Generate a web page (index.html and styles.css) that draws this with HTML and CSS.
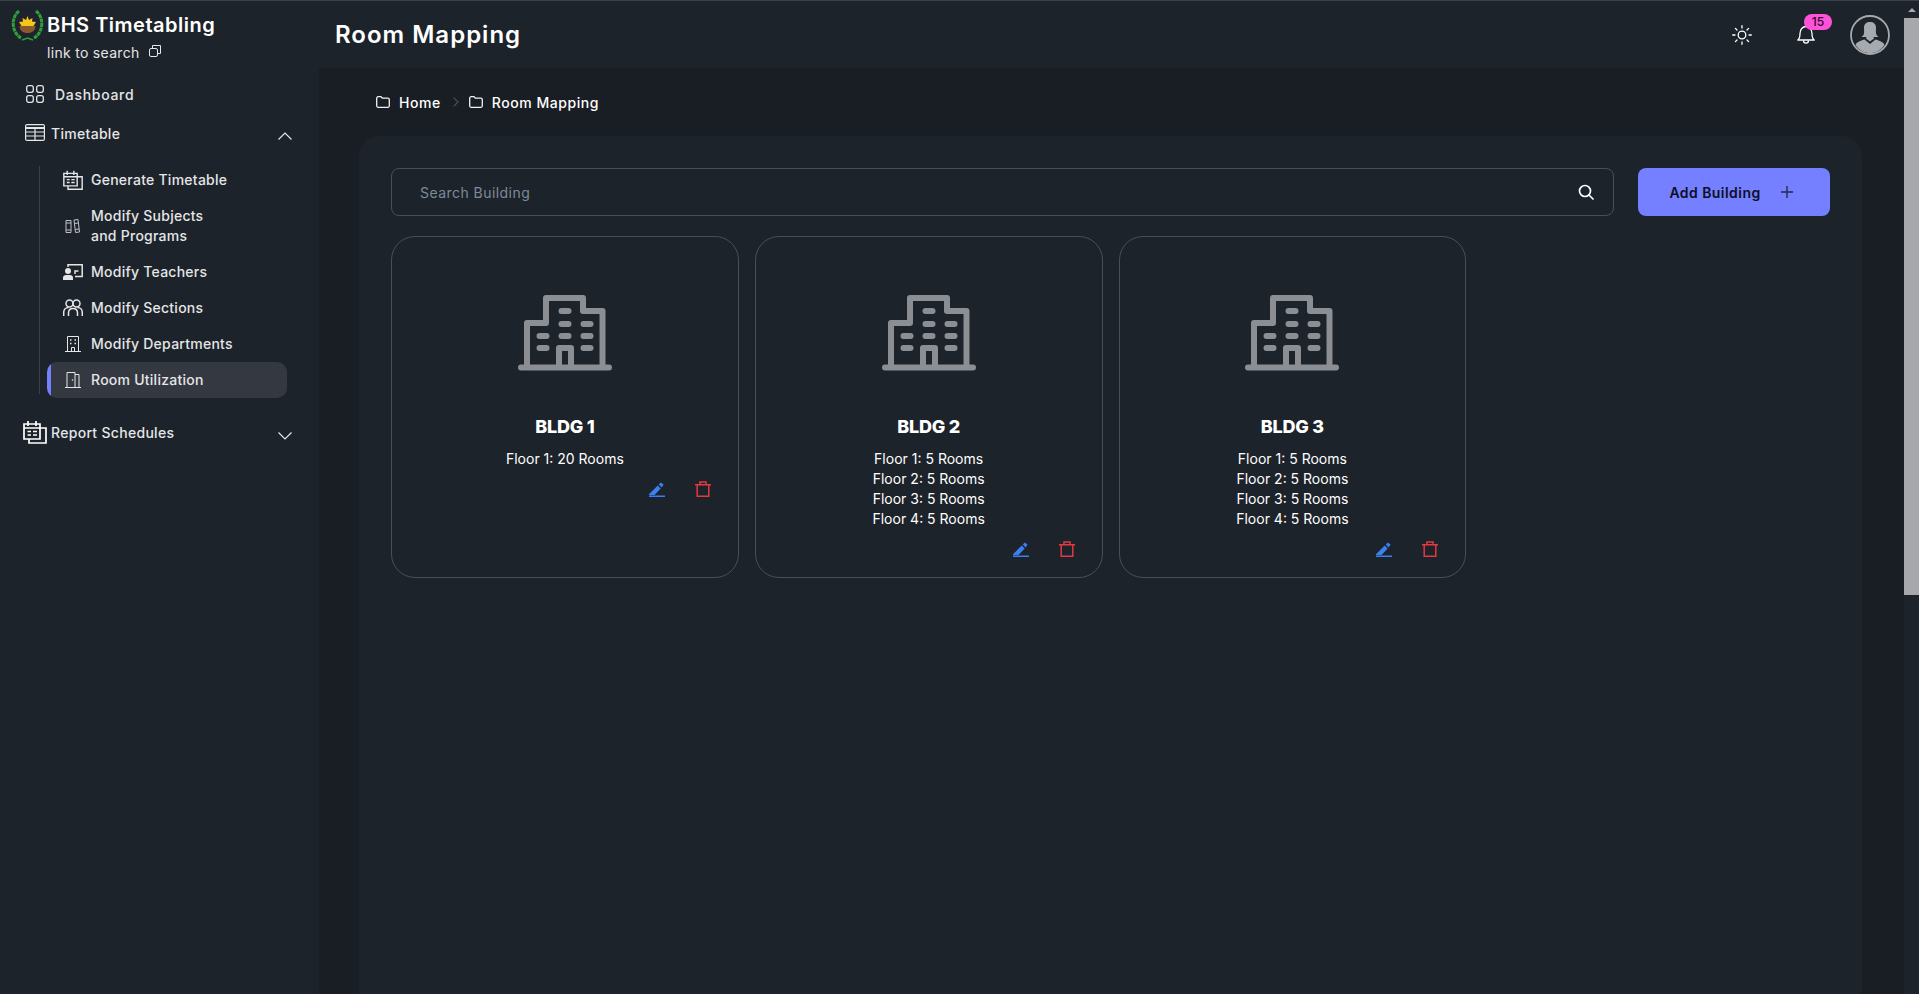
FILE: index.html
```html
<!DOCTYPE html>
<html lang="en">
<head>
    <meta charset="UTF-8">
    <meta name="viewport" content="width=device-width, initial-scale=1.0">
    <title>Room Mapping</title>
    <!-- STYLING -->
    <link rel="stylesheet" href="styles.css">
</head>
<body>
    <!-- shared icons -->
    <svg class="icon-defs" aria-hidden="true">
        <symbol id="i-building" viewBox="0 0 94 76">
            <g fill="none" stroke="currentColor" stroke-width="6" stroke-linecap="round" stroke-linejoin="round">
                <path d="M3 72.500H91M9 72.500V28H28V3H65V16H84.500V72.500M41 72.500V53H53V72.500"/>
                <path d="M43.500 16H50.500M43.500 29H50.500M43.500 41H50.500M65.500 29H72.500M65.500 41H72.500M65.500 53H72.500M21.500 41H28.500M21.500 53H28.500"/>
            </g>
        </symbol>
        <symbol id="i-pencil" viewBox="0 0 16 16">
            <path fill="currentColor" d="M0 13.200 8.700 4.500l3 3L5.600 14H0zM9.800 3.400 11.800 1.400l2.800 2.100-1.900 2.900zM0 14.600H16V16H0z"/>
        </symbol>
        <symbol id="i-trash" viewBox="0 0 16 16">
            <path fill="none" stroke="currentColor" stroke-width="1.500" d="M0 3.700H16M2.200 3.700V15.300H13.800V3.700M5 3.700V.9H11V3.700"/>
        </symbol>
        <symbol id="i-folder" viewBox="0 0 14 12">
            <path fill="none" stroke="currentColor" stroke-width="1.300" stroke-linejoin="round" d="M.7 2.200A1.500 1.500 0 0 1 2.200.7H5L6.500 2.200H11.800A1.500 1.500 0 0 1 13.300 3.700V9.800A1.500 1.500 0 0 1 11.800 11.300H2.200A1.500 1.500 0 0 1 .7 9.800Z"/>
        </symbol>
        <symbol id="i-calendar" viewBox="0 0 24 24">
            <path fill="none" stroke="currentColor" stroke-width="1.700" d="M1 4H17V19H1ZM5 1V6M13 1V6M1 8H17M4.500 11.500H8M10 11.500H14M4.500 15H8M10 15H14M17 8H23V23H6V19"/>
        </symbol>
    </svg>

    <div class="app">
        <aside class="sidebar">
            <div class="brand">
                <svg class="logo" viewBox="0 0 34 32">
                    <circle cx="16.500" cy="15" r="13" fill="#20232f"/>
                    <path fill="none" stroke="#2f9e3a" stroke-width="3" stroke-dasharray="4 .6" d="M8 2C0 8 0 23 10 29M25 2C33 8 33 23 23 29"/>
                    <path fill="none" stroke="#2f9e3a" stroke-width="1.500" d="M11 31 16.500 29 22 31"/>
                    <path fill="#f5c71a" d="M16.500 7 18 11 21.500 9 21 12.500 25 13 22.500 17H10.500L8 13 12 12.500 11.500 9 15 11Z"/>
                    <path fill="#8a5a2e" d="M8.500 17H24.500C24.500 21.500 21 24 16.500 24S8.500 21.500 8.500 17Z"/>
                </svg>
                <span class="brand-name">BHS Timetabling</span>
            </div>
            <div class="brand-link">
                <span>link to search</span>
                <svg class="icon-copy" viewBox="0 0 12 12" fill="none" stroke="currentColor">
                    <path d="M3.500 3V.5H11.500V8.500H9"/>
                    <rect x=".5" y="3.500" width="8" height="8" rx="1.500"/>
                </svg>
            </div>

            <a class="nav-item nav-dashboard">
                <svg class="icon-dash" viewBox="0 0 18 18" fill="none" stroke="currentColor" stroke-width="1.300">
                    <rect x=".7" y=".7" width="6.600" height="6.600" rx="2"/>
                    <rect x="10.700" y=".7" width="6.600" height="6.600" rx="2"/>
                    <rect x=".7" y="10.700" width="6.600" height="6.600" rx="2"/>
                    <rect x="10.700" y="10.700" width="6.600" height="6.600" rx="2"/>
                </svg>
                <span>Dashboard</span>
            </a>

            <a class="nav-item nav-timetable">
                <svg class="icon-table" viewBox="0 0 20 17" fill="none" stroke="currentColor" stroke-width="1.200">
                    <rect x=".6" y=".6" width="18.800" height="15.800" rx="1.500"/>
                    <path stroke-width="2" d="M0 4H20"/>
                    <path d="M0 8H20M0 12H20M10 4V17"/>
                </svg>
                <span class="nav-label">Timetable</span>
                <svg class="chevron" viewBox="0 0 14 8" fill="none" stroke="currentColor" stroke-width="1.200"><path d="M.5 7.500 7 1l6.500 6.500"/></svg>
            </a>

            <ul class="subnav">
                <li class="sub-item">
                    <svg class="sub-icon"><use href="#i-calendar"/></svg>
                    <span>Generate Timetable</span>
                </li>
                <li class="sub-item sub-item-tall">
                    <svg class="sub-icon sub-icon-small sub-icon-books" viewBox="0 0 16 16" fill="none" stroke="currentColor">
                        <path d="M1 2.500H6V14.500H1ZM1 5H6M1 12H6M9 2 13 1.500 14.500 14 10.500 14.500ZM9.500 5.500 13.500 5M10.300 11.500 14 11"/>
                    </svg>
                    <span>Modify Subjects<br>and Programs</span>
                </li>
                <li class="sub-item">
                    <svg class="sub-icon" viewBox="0 0 20 16">
                        <path fill="none" stroke="currentColor" stroke-width="1.500" d="M5 3V.8H19.200V12.500H12"/>
                        <path fill="none" stroke="currentColor" stroke-width="1.500" d="M12 10V7H15.500"/>
                        <circle cx="5" cy="7" r="3" fill="currentColor"/>
                        <path fill="currentColor" d="M0 16V13.500C0 12 1.500 11 3 11H7C8.500 11 10 12 10 13.500V16Z"/>
                    </svg>
                    <span>Modify Teachers</span>
                </li>
                <li class="sub-item">
                    <svg class="sub-icon" viewBox="0 0 20 18" fill="none" stroke="currentColor" stroke-width="1.500">
                        <circle cx="6.500" cy="4.500" r="3.500"/>
                        <circle cx="13.500" cy="4.500" r="3.500"/>
                        <path d="M.7 17V13.500C.7 10.500 3 8.500 5.500 8.500M19.300 17V13.500C19.300 10.500 17 8.500 14.500 8.500M5.500 17V14C5.500 11 7.500 9.500 10 9.500S14.500 11 14.500 14V17"/>
                    </svg>
                    <span>Modify Sections</span>
                </li>
                <li class="sub-item">
                    <svg class="sub-icon sub-icon-small" viewBox="0 0 16 16" fill="none" stroke="currentColor">
                        <path d="M0 15.500H16M2.500 15.500V.5H13.500V15.500M6.500 15.500V11.500H9.500V15.500"/>
                        <path stroke-width="1.400" d="M5 4H6.500M9.500 4H11M5 7.500H6.500M9.500 7.500H11"/>
                    </svg>
                    <span>Modify Departments</span>
                </li>
                <li class="sub-item sub-item-active">
                    <svg class="sub-icon sub-icon-small" viewBox="0 0 16 16" fill="none" stroke="currentColor">
                        <path d="M0 15.500H16M2 15.500V.5H10V15.500M10 2.500H14V15.500"/>
                        <circle cx="7.500" cy="8" r=".8" fill="currentColor" stroke="none"/>
                    </svg>
                    <span>Room Utilization</span>
                </li>
            </ul>

            <a class="nav-item nav-report">
                <svg class="icon-report"><use href="#i-calendar"/></svg>
                <span class="nav-label">Report Schedules</span>
                <svg class="chevron chevron-down" viewBox="0 0 14 8" fill="none" stroke="currentColor" stroke-width="1.200"><path d="M.5.5 7 7l6.500-6.500"/></svg>
            </a>
        </aside>

        <div class="main">
            <header class="topbar">
                <h1 class="page-title">Room Mapping</h1>
                <svg class="icon-sun" viewBox="0 0 20 20" fill="none" stroke="currentColor" stroke-width="1.300" stroke-linecap="round">
                    <circle cx="10" cy="10" r="3.800"/>
                    <path d="M10 .7V3M10 17V19.300M.7 10H3M17 10H19.300M3.400 3.400 5 5M15 15 16.600 16.600M3.400 16.600 5 15M15 5 16.600 3.400"/>
                </svg>
                <div class="bell">
                    <svg class="icon-bell" viewBox="0 0 18 19" fill="none" stroke="currentColor" stroke-width="1.300" stroke-linejoin="round">
                        <path d="M.8 15C2.800 13.500 3 11 3 8.500 3 4.500 5.500 1.500 9 1.500S15 4.500 15 8.500C15 11 15.200 13.500 17.200 15Z"/>
                        <path d="M6.500 15.500C6.500 19 11.500 19 11.500 15.500"/>
                    </svg>
                    <span class="badge">15</span>
                </div>
                <svg class="avatar" viewBox="0 0 40 40">
                    <circle cx="20" cy="20" r="19" fill="none" stroke="#a6a9ae" stroke-width="1.800"/>
                    <path fill="#a6a9ae" d="M13.500 20C14.500 18 14 15 14 12.500 14 9 16.500 7 20 7S26 9 26 12.500C26 15 25.500 18 26.500 20L28.500 22H23.500L24 23.500 20 26.500 16 23.500 16.500 22H11.500Z"/>
                    <path fill="#a6a9ae" d="M5.500 30C6.500 27.500 9 26 14.500 24.500L20 29 25.500 24.500C31 26 33.500 27.500 34.500 30 31 35 26 38.200 20 38.200S9 35 5.500 30Z"/>
                </svg>
            </header>

            <div class="content">
                <nav class="breadcrumb">
                    <svg class="icon-folder"><use href="#i-folder"/></svg>
                    <span>Home</span>
                    <svg class="crumb-sep" viewBox="0 0 6 10" fill="none" stroke="currentColor" stroke-width="1.200"><path d="M.7.7 5 5 .7 9.300"/></svg>
                    <svg class="icon-folder"><use href="#i-folder"/></svg>
                    <span>Room Mapping</span>
                </nav>

                <section class="panel">
                    <div class="toolbar">
                        <label class="search">
                            <input type="text" class="search-input" placeholder="Search Building">
                            <svg class="icon-search" viewBox="0 0 16 16" fill="none" stroke="currentColor" stroke-width="1.700" stroke-linecap="round">
                                <circle cx="7" cy="7" r="5.500"/>
                                <path d="M11 11 15 15"/>
                            </svg>
                        </label>
                        <button class="btn-add">
                            <span>Add Building</span>
                            <svg class="icon-plus" viewBox="0 0 12 12" fill="none" stroke="currentColor" stroke-width="1.400"><path d="M6 0V12M0 6H12"/></svg>
                        </button>
                    </div>

                    <div class="cards">
                        <article class="card">
                            <svg class="card-icon"><use href="#i-building"/></svg>
                            <h2 class="card-title">BLDG 1</h2>
                            <div class="floors">
                                <p>Floor 1: 20 Rooms</p>
                            </div>
                            <div class="card-actions">
                                <svg class="act-edit"><use href="#i-pencil"/></svg>
                                <svg class="act-delete"><use href="#i-trash"/></svg>
                            </div>
                        </article>
                        <article class="card">
                            <svg class="card-icon"><use href="#i-building"/></svg>
                            <h2 class="card-title">BLDG 2</h2>
                            <div class="floors">
                                <p>Floor 1: 5 Rooms</p>
                                <p>Floor 2: 5 Rooms</p>
                                <p>Floor 3: 5 Rooms</p>
                                <p>Floor 4: 5 Rooms</p>
                            </div>
                            <div class="card-actions">
                                <svg class="act-edit"><use href="#i-pencil"/></svg>
                                <svg class="act-delete"><use href="#i-trash"/></svg>
                            </div>
                        </article>
                        <article class="card">
                            <svg class="card-icon"><use href="#i-building"/></svg>
                            <h2 class="card-title">BLDG 3</h2>
                            <div class="floors">
                                <p>Floor 1: 5 Rooms</p>
                                <p>Floor 2: 5 Rooms</p>
                                <p>Floor 3: 5 Rooms</p>
                                <p>Floor 4: 5 Rooms</p>
                            </div>
                            <div class="card-actions">
                                <svg class="act-edit"><use href="#i-pencil"/></svg>
                                <svg class="act-delete"><use href="#i-trash"/></svg>
                            </div>
                        </article>
                    </div>
                </section>
            </div>
        </div>

        <div class="scrollbar">
            <span class="scroll-arrow"></span>
            <span class="scroll-thumb"></span>
        </div>
    </div>
</body>
</html>
```

FILE: styles.css
```css
* {
    box-sizing: border-box;
}

html,
body {
    height: 100%;
}

body {
    margin: 0;
    overflow: hidden;
    background-color: #191e24;
    color: #fff;
    font-family: "Inter", "Noto Sans", sans-serif;
    font-size: 14px;
}

.icon-defs {
    display: none;
}

.app {
    height: 100vh;
    display: flex;
    border-top: 1px solid #3a4046;
}

/* SIDEBAR */
.sidebar {
    width: 319px;
    flex-shrink: 0;
    background-color: #1d232a;
    color: #e4e6e8;
}

.brand {
    display: flex;
    align-items: center;
    height: 30px;
    margin-top: 9px;
    padding-left: 11px;
}

.logo {
    width: 34px;
    height: 32px;
    margin-right: 2px;
    flex-shrink: 0;
}

.brand-name {
    font-size: 20px;
    font-weight: 600;
    color: #fff;
    letter-spacing: .5px;
}

.brand-link {
    display: flex;
    align-items: center;
    gap: 9px;
    height: 20px;
    margin-top: 2px;
    padding-left: 47px;
    letter-spacing: .3px;
}

.icon-copy {
    width: 12px;
    height: 12px;
    margin-top: -3px;
}

.nav-item {
    display: flex;
    align-items: center;
    height: 36px;
    font-weight: 500;
    letter-spacing: .3px;
}

.nav-dashboard {
    margin-top: 14px;
    padding-left: 26px;
    gap: 11px;
    letter-spacing: .7px;
}

.icon-dash {
    width: 18px;
    height: 18px;
}

.nav-timetable {
    margin-top: 3px;
    padding-left: 25px;
    padding-right: 27px;
    gap: 6px;
}

.icon-table {
    width: 20px;
    height: 17px;
    margin-top: -1px;
}

.nav-label {
    flex: 1;
}

.chevron {
    width: 14px;
    height: 8px;
    margin-top: 6px;
}

.subnav {
    position: relative;
    list-style: none;
    margin: 11px 32px 0 47px;
    padding: 0;
}

.subnav::before {
    content: "";
    position: absolute;
    left: -8px;
    top: 4px;
    bottom: 4px;
    width: 1px;
    background-color: #3a4046;
}

.sub-item {
    display: flex;
    align-items: center;
    gap: 8px;
    height: 36px;
    padding-left: 16px;
    font-weight: 500;
    letter-spacing: .25px;
    line-height: 20px;
}

.sub-item-tall {
    height: 56px;
}

.sub-icon {
    width: 20px;
    height: 20px;
    flex-shrink: 0;
}

.sub-icon-small {
    padding: 2px;
}

.sub-icon-books {
    color: #bfc2c6;
}

.sub-item-active {
    background: linear-gradient(90deg, #7480ff 4px, #343941 4px);
    border-radius: 10px;
}

.nav-report {
    margin-top: 16px;
    padding-left: 23px;
    padding-right: 27px;
    gap: 4px;
}

.icon-report {
    width: 24px;
    height: 24px;
    color: #fff;
}

.chevron-down {
    margin-top: 7px;
}

/* TOP BAR */
.main {
    flex: 1;
    min-width: 0;
    display: flex;
    flex-direction: column;
}

.topbar {
    height: 67px;
    flex-shrink: 0;
    display: flex;
    align-items: center;
    padding: 0 14px 0 16px;
    background-color: #1d232a;
}

.page-title {
    flex: 1;
    margin: 0;
    font-size: 24px;
    font-weight: 600;
    letter-spacing: 1px;
}

.icon-sun {
    width: 20px;
    height: 20px;
    margin-right: 45px;
}

.bell {
    position: relative;
    width: 18px;
    height: 19px;
    margin-right: 35px;
}

.icon-bell {
    display: block;
    width: 18px;
    height: 19px;
}

.badge {
    position: absolute;
    left: 7px;
    top: -11px;
    width: 28px;
    height: 16px;
    border-radius: 8px;
    background-color: #ff52d9;
    color: #2a0a24;
    font-size: 12px;
    font-weight: 500;
    line-height: 16px;
    text-align: center;
}

.avatar {
    width: 40px;
    height: 40px;
}

/* CONTENT */
.content {
    flex: 1;
    min-height: 0;
    display: flex;
    flex-direction: column;
    padding: 24px 42px 0 40px;
}

.breadcrumb {
    display: flex;
    align-items: center;
    height: 20px;
    padding-left: 17px;
    font-weight: 500;
    letter-spacing: .55px;
}

.icon-folder {
    width: 14px;
    height: 12px;
    margin-right: 9px;
    color: #f0f1f2;
}

.crumb-sep {
    width: 6px;
    height: 10px;
    margin: 0 10px 0 12px;
    color: #4a4f55;
}

.panel {
    flex: 1;
    margin-top: 24px;
    padding: 32px;
    background-color: #1d232a;
    border-radius: 20px 20px 0 0;
}

.toolbar {
    display: flex;
    gap: 24px;
    height: 48px;
}

.search {
    flex: 1;
    display: flex;
    align-items: center;
    padding: 0 19px 0 28px;
    border: 1px solid #4a4f55;
    border-radius: 8px;
}

.search-input {
    flex: 1;
    border: 0;
    outline: 0;
    padding: 0;
    background: transparent;
    color: #fff;
    font-family: inherit;
    font-size: 14px;
    letter-spacing: .45px;
}

.search-input::placeholder {
    color: #7f8a99;
    opacity: 1;
}

.icon-search {
    width: 16px;
    height: 16px;
}

.btn-add {
    width: 192px;
    display: flex;
    align-items: center;
    justify-content: center;
    gap: 20px;
    padding: 0 6px 0 0;
    border: 0;
    border-radius: 8px;
    background-color: #7480ff;
    color: #0d0f24;
    font-family: inherit;
    font-size: 14px;
    font-weight: 600;
    letter-spacing: .45px;
}

.icon-plus {
    width: 12px;
    height: 12px;
    color: #24284f;
}

.cards {
    display: flex;
    gap: 16px;
    margin-top: 20px;
}

.card {
    width: 347.750px;
    display: flex;
    flex-direction: column;
    align-items: center;
    padding: 58px 27px 20px;
    border: 1px solid #4a4f55;
    border-radius: 24px;
}

.card-icon {
    width: 94px;
    height: 76px;
    color: #8b8e92;
}

.card-title {
    margin: 42px 0 0;
    font-size: 18px;
    font-weight: 800;
    line-height: 28px;
    letter-spacing: -.2px;
}

.floors {
    margin-top: 8px;
    text-align: center;
    line-height: 20px;
}

.floors p {
    margin: 0;
}

.card-actions {
    align-self: flex-end;
    display: flex;
    gap: 30px;
    margin-top: 12px;
}

.act-edit,
.act-delete {
    width: 16px;
    height: 16px;
}

.act-edit {
    color: #3b7ff0;
}

.act-delete {
    color: #e5383f;
}

/* SCROLLBAR */
.scrollbar {
    width: 15px;
    flex-shrink: 0;
    display: flex;
    flex-direction: column;
    align-items: center;
    background-color: #1d232a;
}

.scroll-arrow {
    margin-top: 7px;
    border-left: 4px solid transparent;
    border-right: 4px solid transparent;
    border-bottom: 4px solid #a6a8ab;
}

.scroll-thumb {
    width: 100%;
    height: 577px;
    margin-top: 6px;
    background-color: #a6a8ab;
}
```
